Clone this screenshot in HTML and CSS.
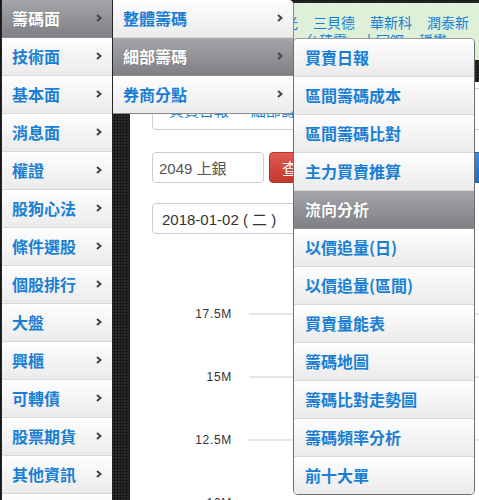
FILE: index.html
```html
<!DOCTYPE html>
<html lang="zh-Hant">
<head>
<meta charset="utf-8">
<title>籌碼面 - 細部籌碼</title>
<link rel="stylesheet" href="styles.css">
</head>
<body>
<div class="layout">
  <nav class="sidenav">
    <ul class="menu menu-main">
      <li class="item">
        <a class="link active" href="#">籌碼面<svg class="chev" viewBox="0 0 6 8" width="6" height="8"><path d="M1 1l3.5 3L1 7" fill="none" stroke="#444" stroke-width="2"/></svg></a>
        <ul class="menu menu-sub">
          <li class="item"><a class="link" href="#">整體籌碼<svg class="chev" viewBox="0 0 6 8" width="6" height="8"><path d="M1 1l3.5 3L1 7" fill="none" stroke="#444" stroke-width="2"/></svg></a></li>
          <li class="item">
            <a class="link active" href="#">細部籌碼<svg class="chev" viewBox="0 0 6 8" width="6" height="8"><path d="M1 1l3.5 3L1 7" fill="none" stroke="#444" stroke-width="2"/></svg></a>
            <ul class="menu menu-leaf">
              <li class="item"><a class="link" href="#">買賣日報</a></li>
              <li class="item"><a class="link" href="#">區間籌碼成本</a></li>
              <li class="item"><a class="link" href="#">區間籌碼比對</a></li>
              <li class="item"><a class="link" href="#">主力買賣推算</a></li>
              <li class="item"><span class="link heading">流向分析</span></li>
              <li class="item"><a class="link" href="#">以價追量(日)</a></li>
              <li class="item"><a class="link" href="#">以價追量(區間)</a></li>
              <li class="item"><a class="link" href="#">買賣量能表</a></li>
              <li class="item"><a class="link" href="#">籌碼地圖</a></li>
              <li class="item"><a class="link" href="#">籌碼比對走勢圖</a></li>
              <li class="item"><a class="link" href="#">籌碼頻率分析</a></li>
              <li class="item"><a class="link last" href="#">前十大單</a></li>
            </ul>
          </li>
          <li class="item"><a class="link" href="#">券商分點<svg class="chev" viewBox="0 0 6 8" width="6" height="8"><path d="M1 1l3.5 3L1 7" fill="none" stroke="#444" stroke-width="2"/></svg></a></li>
        </ul>
      </li>
      <li class="item"><a class="link" href="#">技術面<svg class="chev" viewBox="0 0 6 8" width="6" height="8"><path d="M1 1l3.5 3L1 7" fill="none" stroke="#444" stroke-width="2"/></svg></a></li>
      <li class="item"><a class="link" href="#">基本面<svg class="chev" viewBox="0 0 6 8" width="6" height="8"><path d="M1 1l3.5 3L1 7" fill="none" stroke="#444" stroke-width="2"/></svg></a></li>
      <li class="item"><a class="link" href="#">消息面<svg class="chev" viewBox="0 0 6 8" width="6" height="8"><path d="M1 1l3.5 3L1 7" fill="none" stroke="#444" stroke-width="2"/></svg></a></li>
      <li class="item"><a class="link" href="#">權證<svg class="chev" viewBox="0 0 6 8" width="6" height="8"><path d="M1 1l3.5 3L1 7" fill="none" stroke="#444" stroke-width="2"/></svg></a></li>
      <li class="item"><a class="link" href="#">股狗心法<svg class="chev" viewBox="0 0 6 8" width="6" height="8"><path d="M1 1l3.5 3L1 7" fill="none" stroke="#444" stroke-width="2"/></svg></a></li>
      <li class="item"><a class="link" href="#">條件選股<svg class="chev" viewBox="0 0 6 8" width="6" height="8"><path d="M1 1l3.5 3L1 7" fill="none" stroke="#444" stroke-width="2"/></svg></a></li>
      <li class="item"><a class="link" href="#">個股排行<svg class="chev" viewBox="0 0 6 8" width="6" height="8"><path d="M1 1l3.5 3L1 7" fill="none" stroke="#444" stroke-width="2"/></svg></a></li>
      <li class="item"><a class="link" href="#">大盤<svg class="chev" viewBox="0 0 6 8" width="6" height="8"><path d="M1 1l3.5 3L1 7" fill="none" stroke="#444" stroke-width="2"/></svg></a></li>
      <li class="item"><a class="link" href="#">興櫃<svg class="chev" viewBox="0 0 6 8" width="6" height="8"><path d="M1 1l3.5 3L1 7" fill="none" stroke="#444" stroke-width="2"/></svg></a></li>
      <li class="item"><a class="link" href="#">可轉債<svg class="chev" viewBox="0 0 6 8" width="6" height="8"><path d="M1 1l3.5 3L1 7" fill="none" stroke="#444" stroke-width="2"/></svg></a></li>
      <li class="item"><a class="link" href="#">股票期貨<svg class="chev" viewBox="0 0 6 8" width="6" height="8"><path d="M1 1l3.5 3L1 7" fill="none" stroke="#444" stroke-width="2"/></svg></a></li>
      <li class="item"><a class="link" href="#">其他資訊<svg class="chev" viewBox="0 0 6 8" width="6" height="8"><path d="M1 1l3.5 3L1 7" fill="none" stroke="#444" stroke-width="2"/></svg></a></li>
      <li class="item"><a class="link" href="#">會員專區<svg class="chev" viewBox="0 0 6 8" width="6" height="8"><path d="M1 1l3.5 3L1 7" fill="none" stroke="#444" stroke-width="2"/></svg></a></li>
    </ul>
  </nav>

  <main class="content">
    <div class="quotes">
      <div class="quote-row">
        <a href="#">聯發科</a><a href="#">台達電</a><a href="#">日月光</a><a href="#">三貝德</a><a href="#">華新科</a><a href="#">潤泰新</a>
      </div>
      <div class="quote-row second">
        <a href="#">南亞科</a><a href="#">中華電</a><a href="#">可成</a><a href="#">台積電</a><a href="#">大同鋼</a><a href="#">穩懋</a>
      </div>
    </div>

    <section class="panel">
      <div class="crumb">買賣日報 — 細部籌碼</div>

      <form class="search">
        <input class="field" type="text" value="2049 上銀">
        <button class="btn btn-red" type="button">查詢</button>
        <button class="btn btn-blue" type="button">列印</button>
      </form>

      <div class="date">2018-01-02 ( 二 )</div>

      <div class="chart">
        <div class="tick"><span>17.5M</span><i></i></div>
        <div class="tick"><span>15M</span><i></i></div>
        <div class="tick"><span>12.5M</span><i></i></div>
        <div class="tick"><span>10M</span><i></i></div>
      </div>
    </section>
  </main>
</div>
</body>
</html>
```

FILE: styles.css
```css
* {
  box-sizing: border-box;
}

html,
body {
  margin: 0;
  height: 100%;
  overflow: hidden;
}

body {
  background-color: #2a2a2a;
  background-image:
    linear-gradient(90deg, rgba(0, 0, 0, 0.35) 1px, transparent 1px),
    linear-gradient(rgba(0, 0, 0, 0.35) 1px, transparent 1px);
  background-size: 3px 3px;
  font-family: "Noto Sans CJK TC", "Noto Sans", sans-serif;
}

.layout {
  display: grid;
  grid-template-columns: 110px 1fr;
  column-gap: 18px;
  padding-left: 2px;
  height: 500px;
}

/* ---- dropdown navigation ---- */

.sidenav {
  position: relative;
  z-index: 5;
}

.menu {
  list-style: none;
  margin: 0;
  padding: 0;
}

.item {
  position: relative;
}

.link {
  display: flex;
  align-items: center;
  justify-content: space-between;
  height: 38px;
  padding: 0 10px 1px 10px;
  border-bottom: 1px solid #d8d8d8;
  background: linear-gradient(#fefefe, #ebebeb);
  color: #1a7fd4;
  font-size: 16px;
  font-weight: 700;
  text-decoration: none;
  white-space: nowrap;
}

.link.active,
.link.heading {
  background: linear-gradient(#a4a6aa, #7e8084);
  border-bottom-color: #8a8c90;
  color: #fff;
  text-shadow: 0 0 1px rgba(0, 0, 0, 0.35);
}

.chev {
  flex: none;
}

.menu-sub {
  position: absolute;
  left: 111px;
  top: 0;
  width: 181px;
  border-right: 1px solid #8c8c8c;
  border-bottom: 1px solid #8c8c8c;
  border-radius: 0 5px 5px 0;
  background: #fff;
}

.menu-sub > .item:first-child > .link {
  border-top-right-radius: 5px;
}

.menu-sub > .item:last-child > .link {
  border-bottom: none;
  height: 37px;
  border-bottom-right-radius: 5px;
}

.menu-leaf {
  position: absolute;
  left: 180px;
  top: 0;
  width: 182px;
  border: 1px solid #6e6e6e;
  border-top-color: #9a9a9a;
  border-radius: 5px;
  overflow: hidden;
  background: #fff;
}

.menu-leaf .link {
  padding-left: 11px;
}

.menu-leaf .link.last {
  border-bottom: none;
  height: 37px;
}

/* ---- page content ---- */

.content {
  display: flex;
  flex-direction: column;
  margin-top: 3px;
  min-width: 0;
  overflow: hidden;
}

.quotes {
  height: 57px;
  padding: 10px 0 0 12px;
  background: #dff0d8;
}

.quote-row {
  display: flex;
  gap: 15px;
  font-size: 14px;
  line-height: 18px;
  white-space: nowrap;
}

.quote-row.second {
  margin-left: 6px;
}

.quote-row a {
  color: #1a7fd4;
  text-decoration: none;
}

.panel {
  flex: 1;
  margin-top: 22px;
  padding-left: 22px;
  background: #fff;
  overflow: hidden;
}

.crumb {
  margin-top: 6px;
  margin-right: -40px;
  padding: 12px 16px 10px;
  border: 1px solid #cfcfcf;
  border-radius: 4px;
  color: #1a7fd4;
  font-size: 15px;
  line-height: 18px;
}

.search {
  display: flex;
  gap: 5px;
  height: 31px;
  margin: 22px 0 0;
}

.field {
  width: 112px;
  height: 31px;
  padding: 0 6px;
  border: 1px solid #cccccc;
  border-radius: 4px;
  color: #555;
  font-family: "Liberation Sans", "Noto Sans CJK TC", sans-serif;
  font-size: 15px;
}

.btn {
  flex: none;
  height: 31px;
  padding: 0 0 0 12px;
  border-radius: 4px;
  color: #fff;
  font-family: "Noto Sans CJK TC", sans-serif;
  font-size: 16px;
  text-align: left;
}

.btn-red {
  width: 60px;
  border: 1px solid #b8332a;
  background: linear-gradient(#e05a4f, #c2392e);
}

.btn-blue {
  width: 70px;
  margin-left: 136px;
  border: 1px solid #1a62b8;
  background: linear-gradient(#3b8ee0, #1c6cc8);
}

.date {
  display: flex;
  align-items: center;
  width: 220px;
  height: 31px;
  margin-top: 20px;
  padding: 0 9px;
  border: 1px solid #cccccc;
  border-radius: 4px;
  color: #333;
  font-family: "Liberation Sans", "Noto Sans CJK TC", sans-serif;
  font-size: 15px;
}

.chart {
  margin-top: 48px;
}

.tick {
  display: flex;
  align-items: center;
  height: 63px;
}

.tick span {
  width: 80px;
  text-align: right;
  color: #333;
  font-family: "Liberation Sans", sans-serif;
  font-size: 12px;
  letter-spacing: 0.7px;
}

.tick i {
  flex: 1;
  height: 2px;
  margin-left: 17px;
  background: #e6e6e6;
}
```
